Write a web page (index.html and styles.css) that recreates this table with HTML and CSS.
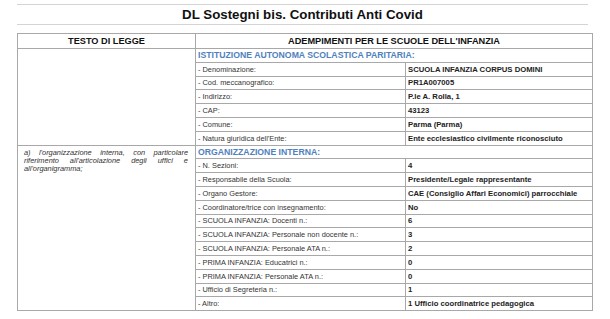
FILE: index.html
```html
<!DOCTYPE html>
<html lang="it">
<head>
<meta charset="utf-8">
<title>DL Sostegni bis. Contributi Anti Covid</title>
<link rel="stylesheet" href="styles.css">
</head>
<body>
<div class="page">
  <h1 class="title">DL Sostegni bis. Contributi Anti Covid</h1>
  <table class="grid">
    <colgroup>
      <col class="c-law">
      <col class="c-label">
      <col class="c-value">
    </colgroup>
    <thead>
      <tr class="head-row">
        <th>TESTO DI LEGGE</th>
        <th colspan="2">ADEMPIMENTI PER LE SCUOLE DELL'INFANZIA</th>
      </tr>
    </thead>
    <tbody>
      <tr class="sec-row">
        <td class="law" rowspan="7"></td>
        <td class="sec" colspan="2">ISTITUZIONE AUTONOMA SCOLASTICA PARITARIA:</td>
      </tr>
      <tr><td class="lbl">- Denominazione:</td><td class="val">SCUOLA INFANZIA CORPUS DOMINI</td></tr>
      <tr><td class="lbl">- Cod. meccanografico:</td><td class="val">PR1A007005</td></tr>
      <tr><td class="lbl">- Indirizzo:</td><td class="val">P.le A. Rolla, 1</td></tr>
      <tr><td class="lbl">- CAP:</td><td class="val">43123</td></tr>
      <tr><td class="lbl">- Comune:</td><td class="val">Parma (Parma)</td></tr>
      <tr><td class="lbl">- Natura giuridica dell'Ente:</td><td class="val">Ente ecclesiastico civilmente riconosciuto</td></tr>
      <tr class="sec-row">
        <td class="law" rowspan="12"><p class="law-text">a) l'organizzazione interna, con particolare riferimento all'articolazione degli uffici e all'organigramma;</p></td>
        <td class="sec" colspan="2">ORGANIZZAZIONE INTERNA:</td>
      </tr>
      <tr><td class="lbl">- N. Sezioni:</td><td class="val">4</td></tr>
      <tr><td class="lbl">- Responsabile della Scuola:</td><td class="val">Presidente/Legale rappresentante</td></tr>
      <tr><td class="lbl">- Organo Gestore:</td><td class="val">CAE (Consiglio Affari Economici) parrocchiale</td></tr>
      <tr><td class="lbl">- Coordinatore/trice con insegnamento:</td><td class="val">No</td></tr>
      <tr><td class="lbl">- SCUOLA INFANZIA: Docenti n.:</td><td class="val">6</td></tr>
      <tr><td class="lbl">- SCUOLA INFANZIA: Personale non docente n.:</td><td class="val">3</td></tr>
      <tr><td class="lbl">- SCUOLA INFANZIA: Personale ATA n.:</td><td class="val">2</td></tr>
      <tr><td class="lbl">- PRIMA INFANZIA: Educatrici n.:</td><td class="val">0</td></tr>
      <tr><td class="lbl">- PRIMA INFANZIA: Personale ATA n.:</td><td class="val">0</td></tr>
      <tr><td class="lbl">- Ufficio di Segreteria n.:</td><td class="val">1</td></tr>
      <tr><td class="lbl">- Altro:</td><td class="val">1 Ufficio coordinatrice pedagogica</td></tr>
    </tbody>
  </table>
</div>
</body>
</html>
```
FILE: styles.css
```css
html, body {
  margin: 0;
  padding: 0;
  background: #ffffff;
}

.page {
  padding: 4px 18px 0 17px;
  font-family: "Liberation Sans", Arial, sans-serif;
  color: #1a1a1a;
}

.title {
  width: 571px;
  box-sizing: border-box;
  height: 21px;
  margin: 0;
  border-top: 1px solid #d4d4d4;
  border-bottom: 1px solid #d4d4d4;
  font-size: 13.3px;
  font-weight: bold;
  line-height: 19px;
  text-align: center;
  color: #111;
}

.grid {
  margin-top: 8px;
  width: 575px;
  border-collapse: collapse;
  table-layout: fixed;
}

.c-law { width: 178px; }
.c-label { width: 210px; }
.c-value { width: 187px; }

.grid th,
.grid td {
  border: 1px solid #a8a8a8;
  padding: 0 2px;
}

.head-row th {
  height: 14px;
  font-size: 9.2px;
  font-weight: bold;
  text-align: center;
  line-height: 10px;
  color: #111;
}

.grid tbody tr {
  height: 13.8px;
}

.lbl {
  font-size: 7.4px;
  line-height: 9px;
  color: #333;
  white-space: nowrap;
  overflow: hidden;
}

.val {
  font-size: 7.7px;
  font-weight: bold;
  line-height: 9px;
  color: #222;
  white-space: nowrap;
}

.sec {
  font-size: 8.7px;
  font-weight: bold;
  line-height: 10px;
  color: #4f81bd;
}

.law {
  vertical-align: top;
  padding: 0;
}

.law-text {
  margin: 3px 5px 0 4px;
  font-size: 7.4px;
  font-style: italic;
  line-height: 8px;
  text-align: justify;
  color: #333;
}
```
